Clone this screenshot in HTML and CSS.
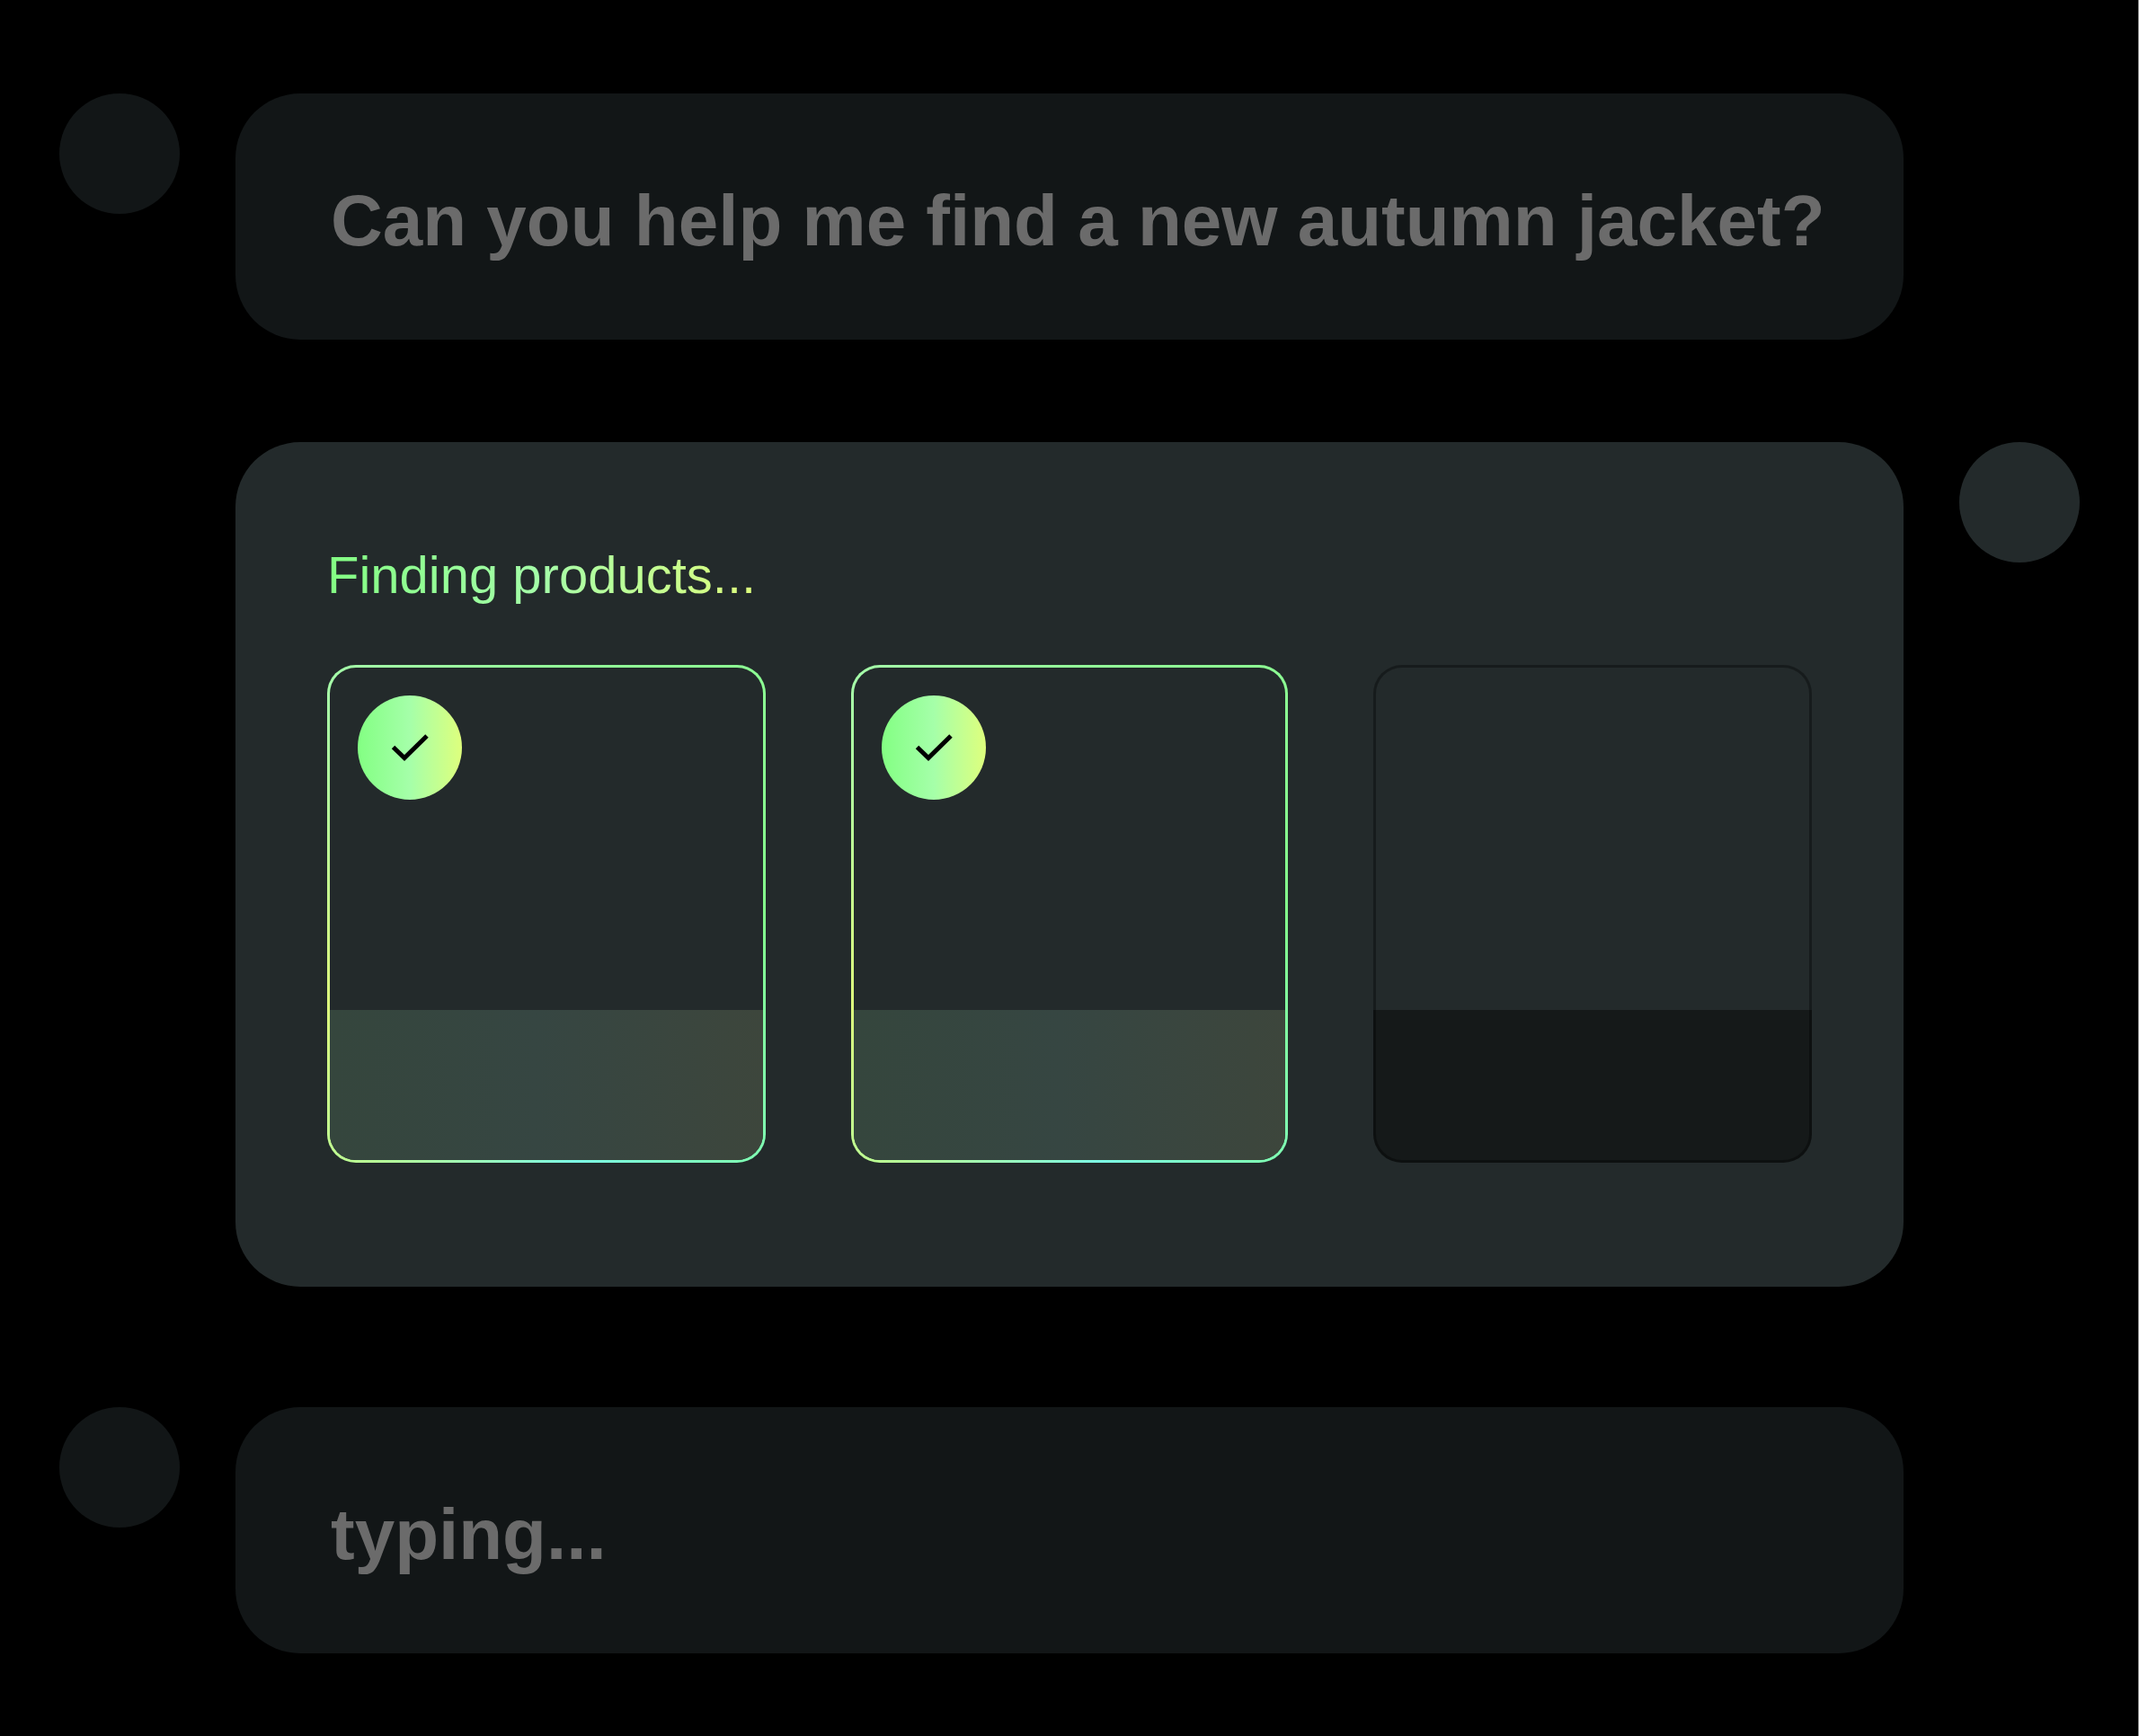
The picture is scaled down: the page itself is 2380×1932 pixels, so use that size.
FILE: index.html
```html
<!DOCTYPE html>
<html lang="en">
<head>
  <meta charset="utf-8">
  <meta name="viewport" content="width=device-width, initial-scale=1">
  <title>Shopping assistant</title>
  <link rel="stylesheet" href="styles.css">
</head>
<body>
  <main class="chat">
    <article class="message message-user">
      <div class="avatar"></div>
      <p class="bubble">Can you help me find a new autumn jacket?</p>
    </article>

    <article class="message message-assistant">
      <section class="bubble results">
        <h2 class="status">Finding products...</h2>
        <ul class="products">
          <li class="product product-found">
            <div class="product-image">
              <span class="check">
                <svg viewBox="0 0 116 116" aria-hidden="true"><path d="M39.500 57.500 52 69.500 77 45"/></svg>
              </span>
            </div>
            <div class="product-info"></div>
          </li>
          <li class="product product-found">
            <div class="product-image">
              <span class="check">
                <svg viewBox="0 0 116 116" aria-hidden="true"><path d="M39.500 57.500 52 69.500 77 45"/></svg>
              </span>
            </div>
            <div class="product-info"></div>
          </li>
          <li class="product">
            <div class="product-image"></div>
            <div class="product-info"></div>
          </li>
        </ul>
      </section>
      <div class="avatar"></div>
    </article>

    <article class="message message-user message-typing">
      <div class="avatar"></div>
      <p class="bubble">typing...</p>
    </article>
  </main>
</body>
</html>
```
FILE: styles.css
```css
* {
  box-sizing: border-box;
}

body {
  margin: 0;
  background: #000;
  font-family: "Liberation Sans", Arial, sans-serif;
}

.chat {
  display: flex;
  flex-direction: column;
  min-height: 100vh;
  padding: 104px 65px 92px 66px;
  border-right: 1px solid #9a9a9a;
}

.message {
  display: grid;
  grid-template-columns: 134px minmax(0, 1fr) 134px;
  column-gap: 62px;
  align-items: start;
}

.message-assistant {
  margin-top: 114px;
}

.message-typing {
  margin-top: 134px;
}

.avatar {
  height: 134px;
  border-radius: 50%;
  background: #121617;
}

.message-assistant .avatar {
  background: #232a2b;
}

.bubble {
  grid-column: 2;
  margin: 0;
  padding: 92px 80px 82px 106px;
  border-radius: 72px;
  background: #121617;
  color: #6b6b6b;
  font-size: 80px;
  font-weight: 700;
  line-height: 100px;
}

.results {
  padding: 112px 102px 138px;
  background: #232a2b;
}

.status {
  width: fit-content;
  margin: 0 0 64px;
  background: linear-gradient(90deg, #83ff83, #a5ffa9 50%, #deff7d);
  background-clip: text;
  color: transparent;
  font-size: 58px;
  font-weight: 400;
  line-height: 72px;
}

.products {
  display: grid;
  grid-template-columns: 244fr 243fr 244fr;
  gap: 95px;
  margin: 0;
  padding: 0;
  list-style: none;
}

.product {
  overflow: hidden;
  border: 3px solid rgba(0, 0, 0, 0.35);
  border-radius: 32px;
  background: linear-gradient(#151919, #151919) bottom / 100% 170px no-repeat border-box;
}

.product-image {
  height: 381px;
  padding: 31px;
}

.product-info {
  height: 167px;
}

.product-found {
  border-color: transparent;
  background:
    linear-gradient(#232a2b, #232a2b) padding-box,
    conic-gradient(#94ff9a, #83ff8b 90deg, #7fffb4 140deg, #7cffe6 173deg, #b8ff96 215deg, #deff7d 247deg, #a5ffa9 318deg, #94ff9a) border-box;
}

.product-found .product-info {
  background: linear-gradient(90deg, #35463d, #364642 48%, #3d463c);
}

.check {
  display: block;
  width: 116px;
  height: 116px;
  border-radius: 50%;
  background: linear-gradient(90deg, #83ff83, #a5ffa9 50%, #deff7d);
}

.check svg {
  display: block;
  fill: none;
  stroke: #000;
  stroke-width: 5;
}
```
